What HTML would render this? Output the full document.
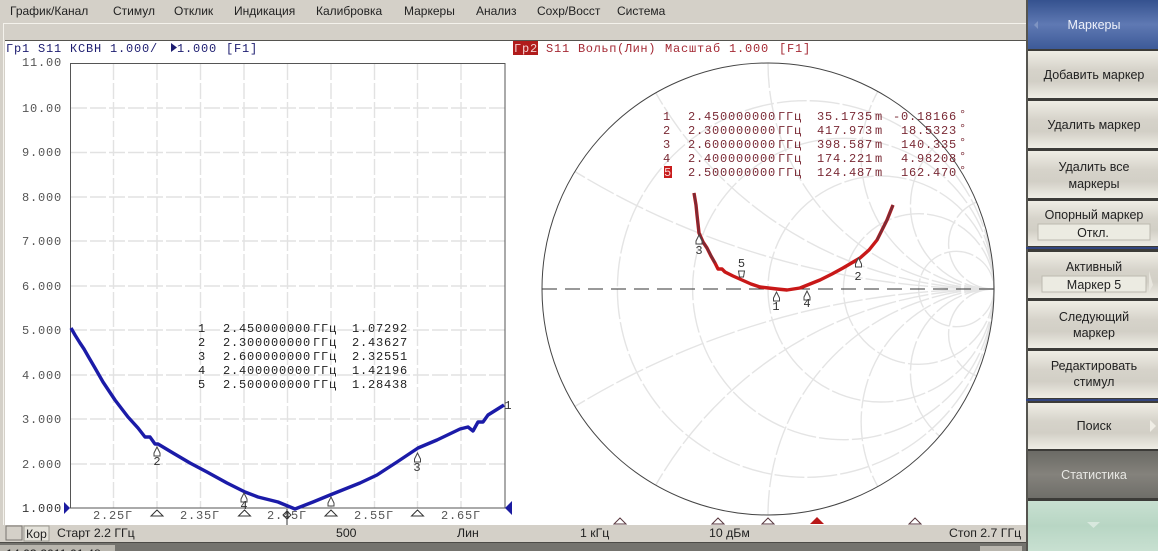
<!DOCTYPE html>
<html lang="ru"><head><meta charset="utf-8"><title>Маркеры</title>
<style>
html,body{margin:0;padding:0;width:1158px;height:551px;overflow:hidden;background:#d4d0c8}
svg{position:absolute;left:0;top:0;display:block}
text{white-space:pre}
.m{font:12px "Liberation Sans",sans-serif;fill:#222}
.c{font:12px "Liberation Mono",monospace;letter-spacing:.8px}
.a{fill:#555;font-size:12px}
.t{fill:#222}.r{fill:#7a2a35}
.b{font:12.500px "Liberation Sans",sans-serif;fill:#222;text-anchor:middle}
.s{font:12.300px "Liberation Sans",sans-serif;fill:#222}
.g{stroke:#e2e2e2;stroke-width:1.400;stroke-dasharray:16 3;fill:none}
.sm{stroke:#e4e4e4;stroke-width:1.400;stroke-dasharray:30 3;fill:none}
.mk{fill:#fff;stroke:#444;stroke-width:1}
.n{font:12px "Liberation Mono",monospace;fill:#333;text-anchor:middle}
</style></head><body>
<svg width="1158" height="551" viewBox="0 0 1158 551" xmlns="http://www.w3.org/2000/svg">
<defs>
<linearGradient id="bt" x1="0" y1="0" x2="0" y2="1"><stop offset="0" stop-color="#efede5"/><stop offset=".4" stop-color="#d6d3ca"/><stop offset=".65" stop-color="#d2cfc6"/><stop offset="1" stop-color="#efede5"/></linearGradient>
<linearGradient id="bl" x1="0" y1="0" x2="0" y2="1"><stop offset="0" stop-color="#35528f"/><stop offset=".5" stop-color="#5f79b3"/><stop offset="1" stop-color="#3d5a98"/></linearGradient>
<linearGradient id="dk" x1="0" y1="0" x2="0" y2="1"><stop offset="0" stop-color="#6b6a65"/><stop offset=".5" stop-color="#84827c"/><stop offset="1" stop-color="#6f6e69"/></linearGradient>
<linearGradient id="gr" x1="0" y1="0" x2="0" y2="1"><stop offset="0" stop-color="#c8e0d1"/><stop offset=".5" stop-color="#b8d6c4"/><stop offset="1" stop-color="#c8e0d1"/></linearGradient>
</defs>
<rect width="1158" height="551" fill="#d4d0c8"/>
<!-- menu -->
<text class="m" x="10" y="15">График/Канал</text>
<text class="m" x="113" y="15">Стимул</text>
<text class="m" x="174" y="15">Отклик</text>
<text class="m" x="234" y="15">Индикация</text>
<text class="m" x="316" y="15">Калибровка</text>
<text class="m" x="404" y="15">Маркеры</text>
<text class="m" x="476" y="15">Анализ</text>
<text class="m" x="537" y="15">Сохр/Восст</text>
<text class="m" x="617" y="15">Система</text>
<rect x="3" y="23" width="1023" height="1" fill="#f4f2ec"/>
<rect x="3" y="23" width="1" height="502" fill="#f4f2ec"/>
<rect x="5" y="40" width="1021" height="1" fill="#55544f"/>
<!-- white area -->
<rect x="5" y="41" width="1021" height="484" fill="#fff"/>

<!-- left header -->
<text class="c" x="6" y="52" fill="#1d1d70">Гр1 S11 КСВН 1.000/</text>
<path d="M171 43v9l6-4.500z" fill="#1d1d70"/>
<text class="c" x="177" y="52" fill="#1d1d70">1.000</text>
<text class="c" x="226" y="52" fill="#1d1d70">[F1]</text>

<!-- left grid -->
<path class="g" d="M71 108H505M71 152.500H505M71 197H505M71 241H505M71 286H505M71 330H505M71 375H505M71 419H505M71 464H505"/>
<path class="g" d="M113.500 64V508M157 64V508M200.500 64V508M244 64V508M287.500 64V508M331 64V508M374.500 64V508M417.500 64V508M461 64V508"/>
<rect x="70.500" y="63.500" width="434.500" height="444.500" fill="none" stroke="#555" stroke-width="1"/>
<!-- y axis labels -->
<g class="c a" text-anchor="end">
<text x="62" y="66" >11.00</text>
<text x="62" y="112">10.00</text>
<text x="62" y="156">9.000</text>
<text x="62" y="201">8.000</text>
<text x="62" y="245">7.000</text>
<text x="62" y="290">6.000</text>
<text x="62" y="334">5.000</text>
<text x="62" y="379">4.000</text>
<text x="62" y="423">3.000</text>
<text x="62" y="468">2.000</text>
<text x="62" y="512" fill="#333">1.000</text>
</g>
<!-- x labels -->
<g class="c a">
<text x="93" y="519">2.25Г</text>
<text x="180" y="519">2.35Г</text>
<text x="267" y="519">2.45Г</text>
<text x="354" y="519">2.55Г</text>
<text x="441" y="519">2.65Г</text>
</g>
<!-- left marker table -->
<g class="c t">
<text x="198" y="332">1</text><text x="223" y="332">2.450000000</text><text x="313" y="332">ГГц</text><text x="352" y="332">1.07292</text>
<text x="198" y="346">2</text><text x="223" y="346">2.300000000</text><text x="313" y="346">ГГц</text><text x="352" y="346">2.43627</text>
<text x="198" y="360">3</text><text x="223" y="360">2.600000000</text><text x="313" y="360">ГГц</text><text x="352" y="360">2.32551</text>
<text x="198" y="374">4</text><text x="223" y="374">2.400000000</text><text x="313" y="374">ГГц</text><text x="352" y="374">1.42196</text>
<text x="198" y="388">5</text><text x="223" y="388">2.500000000</text><text x="313" y="388">ГГц</text><text x="352" y="388">1.28438</text>
</g>
<!-- left trace -->
<path d="M71 328L75 335L80 343L84 349L88 356L95 368L103 382L109 391L115 400L128 417L138 428L145 437L150 437L155 444L158 444L173 453L190 463L207 472L227 483L245 492L258 497L278 502L295 509L313 502L330 495L360 483L377 475L397 462L418 448L437 440L460 429L468 427L473 431L478 422L483 422L488 415L504 405" fill="none" stroke="#1b1ba8" stroke-width="3.400" stroke-linejoin="round"/>
<!-- left markers on trace -->
<path class="mk" d="M157 447l-3 6v3h6v-3z"/><text class="n" x="157" y="465">2</text>
<path class="mk" d="M244 493l-3 6v3h6v-3z"/><text class="n" x="244" y="509">4</text>
<path class="mk" d="M331 497l-3 6v3h6v-3z"/>
<path class="mk" d="M417.500 453l-3 6v3h6v-3z"/><text class="n" x="417" y="471">3</text>
<text class="n" x="508" y="409">1</text>
<!-- bottom triangles -->
<path d="M157 510l-6 6h12zM244.500 510l-6 6h12zM331 510l-6 6h12zM417.500 510l-6 6h12z" fill="#fff" stroke="#333" stroke-width="1"/>
<path d="M287 511l-4 4 4 4 4-4zM287 509v16" fill="none" stroke="#333" stroke-width="1"/>
<path d="M64 502v12l6-6z" fill="#1b1ba0"/>
<path d="M512 501v14l-7-7z" fill="#1b1ba0"/>

<!-- right header -->
<rect x="513" y="41" width="25" height="14" fill="#b01c1c"/>
<text class="c" x="514" y="52" fill="#f3d0d0">Гр2</text>
<text class="c" x="546" y="52" fill="#a52a35">S11</text>
<text class="c" x="578" y="52" fill="#a52a35" style="letter-spacing:.6px">Вольп(Лин)</text>
<text class="c" x="665" y="52" fill="#a52a35">Масштаб</text>
<text class="c" x="729" y="52" fill="#a52a35">1.000</text>
<text class="c" x="779" y="52" fill="#a52a35">[F1]</text>

<!-- smith grid -->
<g class="sm">
<circle cx="805.700" cy="289" r="188.300"/>
<circle cx="843.300" cy="289" r="150.700"/>
<circle cx="881" cy="289" r="113"/>
<circle cx="918.700" cy="289" r="75.300"/>
<circle cx="956.300" cy="289" r="37.700"/>
<path d="M994 289A807 807 0 0 1 575 171.600M994 289A807 807 0 0 0 575 406.400"/>
<path d="M994 289A389.700 389.700 0 0 1 655.700 92.800M994 289A389.700 389.700 0 0 0 655.700 485.200"/>
<path d="M994 289A226 226 0 0 1 768 63M994 289A226 226 0 0 0 768 515"/>
<path d="M994 289A133 133 0 0 1 877.800 91.500M994 289A133 133 0 0 0 877.800 486.500"/>
<path d="M994 289A83.700 83.700 0 0 1 939.500 141.900M994 289A83.700 83.700 0 0 0 939.500 436.100"/>
<path d="M994 289A45.200 45.200 0 0 1 976.600 202M994 289A45.200 45.200 0 0 0 976.600 376"/>
</g>
<circle cx="768" cy="289" r="226" fill="none" stroke="#444" stroke-width="1"/>
<path d="M542 289H994" stroke="#333" stroke-width="1" stroke-dasharray="15 8" fill="none"/>

<!-- right table -->
<g class="c r">
<text x="663" y="120">1</text><text x="688" y="120">2.450000000</text><text x="778" y="120">ГГц</text><text x="817" y="120">35.1735</text><text x="875" y="120">m</text><text x="893" y="120">-0.18166</text><text x="959" y="118">°</text>
<text x="663" y="134">2</text><text x="688" y="134">2.300000000</text><text x="778" y="134">ГГц</text><text x="817" y="134">417.973</text><text x="875" y="134">m</text><text x="901" y="134">18.5323</text><text x="959" y="132">°</text>
<text x="663" y="148">3</text><text x="688" y="148">2.600000000</text><text x="778" y="148">ГГц</text><text x="817" y="148">398.587</text><text x="875" y="148">m</text><text x="901" y="148">140.335</text><text x="959" y="146">°</text>
<text x="663" y="162">4</text><text x="688" y="162">2.400000000</text><text x="778" y="162">ГГц</text><text x="817" y="162">174.221</text><text x="875" y="162">m</text><text x="901" y="162">4.98208</text><text x="959" y="160">°</text>
<rect x="664" y="166" width="8" height="12" fill="#c81c1c"/><text x="664" y="176" fill="#f8d8d8">5</text>
<text x="688" y="176">2.500000000</text><text x="778" y="176">ГГц</text><text x="817" y="176">124.487</text><text x="875" y="176">m</text><text x="901" y="176">162.470</text><text x="959" y="174">°</text>
</g>
<!-- right trace -->
<path d="M694 193L696 205L697 215L698 224L699 233L703 242L707 248L711 256L715 263L718 269L722 269L725 272L733 276L742 280L751 284L760 287L777 289L787 290L800 288L810 284L820 280L832 274L843 268L860 258L869 250L877 240L887 220L893 205" fill="none" stroke="#c81818" stroke-width="3.400" stroke-linejoin="round"/>
<path d="M694 193L696 205L697 215L699 233L703 242L707 248L715 263" fill="none" stroke="#7c2a35" stroke-width="2.400"/>
<path d="M877 240L887 220L893 205" fill="none" stroke="#7c2a35" stroke-width="2.400"/>
<!-- right markers -->
<path class="mk" d="M699 235l-3 6v3h6v-3z" fill="none"/><text class="n" x="699" y="254">3</text>
<text class="n" x="741.500" y="267">5</text><path class="mk" d="M738.500 271h6l-1 6h-4z"/>
<path class="mk" d="M776.500 292l-3 6v3h6v-3z"/><text class="n" x="776" y="310">1</text>
<path class="mk" d="M807 291l-3 6v3h6v-3z"/><text class="n" x="807" y="307">4</text>
<path class="mk" d="M858.500 258l-3 6v3h6v-3z"/><text class="n" x="858" y="280">2</text>
<!-- right bottom triangles -->
<path d="M620 518l-6 6h12zM718 518l-6 6h12zM768 518l-6 6h12zM915 518l-6 6h12z" fill="#fff" stroke="#5a3a40" stroke-width="1"/>
<path d="M817 517l-7 7h14z" fill="#b81818"/>

<!-- status bar -->
<rect x="0" y="525" width="1026" height="17" fill="#d4d0c8"/>
<rect x="6" y="526" width="16" height="14" fill="#d4d0c8" stroke="#77756f" stroke-width="1"/>
<rect x="24" y="526" width="25" height="15" fill="#e4e2da" stroke="#9a9890" stroke-width="1"/>
<text class="s" x="26" y="538">Кор</text>
<text class="s" x="57" y="537">Старт 2.2 ГГц</text>
<text class="s" x="336" y="537">500</text>
<text class="s" x="457" y="537">Лин</text>
<text class="s" x="580" y="537">1 кГц</text>
<text class="s" x="709" y="537">10 дБм</text>
<text class="s" x="949" y="537">Стоп 2.7 ГГц</text>
<rect x="0" y="542" width="1026" height="9" fill="#74736e"/>
<rect x="0" y="542" width="1026" height="1" fill="#4c4b47"/>
<rect x="0" y="545" width="115" height="6" fill="#b9b6ae"/>
<text class="s" x="6" y="558" fill="#111">14.03.2011 01:48</text>
<rect x="980" y="546" width="42" height="5" fill="#b9b6ae"/>

<!-- right panel -->
<rect x="1026" y="0" width="132" height="551" fill="#3c3b38"/>
<rect x="1026" y="0" width="2" height="551" fill="#55544f"/>
<rect x="1028" y="0" width="130" height="49" fill="url(#bl)"/>
<path d="M1038 21l-4 4 4 4z" fill="#7f94c2"/>
<text class="b" x="1094" y="29" style="fill:#eef1fa">Маркеры</text>
<rect x="1028" y="51" width="130" height="47" fill="url(#bt)"/>
<text class="b" x="1094" y="79">Добавить маркер</text>
<rect x="1028" y="101" width="130" height="47" fill="url(#bt)"/>
<text class="b" x="1094" y="129">Удалить маркер</text>
<rect x="1028" y="151" width="130" height="47" fill="url(#bt)"/>
<text class="b" x="1094" y="171">Удалить все</text>
<text class="b" x="1094" y="188">маркеры</text>
<rect x="1028" y="201" width="130" height="45" fill="url(#bt)"/>
<text class="b" x="1094" y="219">Опорный маркер</text>
<rect x="1038" y="224" width="112" height="16" fill="#ecebe2" stroke="#bdbab0" stroke-width="1"/>
<text class="b" x="1093" y="237">Откл.</text>
<rect x="1026" y="247" width="132" height="2" fill="#33457f"/>
<rect x="1028" y="252" width="130" height="46" fill="url(#bt)"/>
<text class="b" x="1094" y="271">Активный</text>
<rect x="1042" y="276" width="104" height="16" fill="#ecebe2" stroke="#bdbab0" stroke-width="1"/>
<text class="b" x="1094" y="289">Маркер 5</text>
<path d="M1149 271l4 14-4 7z" fill="#e8e6de"/>
<rect x="1028" y="301" width="130" height="47" fill="url(#bt)"/>
<text class="b" x="1094" y="321">Следующий</text>
<text class="b" x="1094" y="337">маркер</text>
<rect x="1028" y="351" width="130" height="47" fill="url(#bt)"/>
<text class="b" x="1094" y="370">Редактировать</text>
<text class="b" x="1094" y="386">стимул</text>
<rect x="1026" y="399" width="132" height="2" fill="#33457f"/>
<rect x="1028" y="403" width="130" height="46" fill="url(#bt)"/>
<text class="b" x="1094" y="430">Поиск</text>
<path d="M1150 420v12l6-6z" fill="#f0eee6"/>
<rect x="1028" y="451" width="130" height="47" fill="url(#dk)"/>
<text class="b" x="1094" y="479" style="fill:#e8e8e4">Статистика</text>
<rect x="1028" y="501" width="130" height="50" fill="url(#gr)"/>
<path d="M1087 522h13l-6.500 6z" fill="#d8e8de"/>
</svg>
</body></html>
